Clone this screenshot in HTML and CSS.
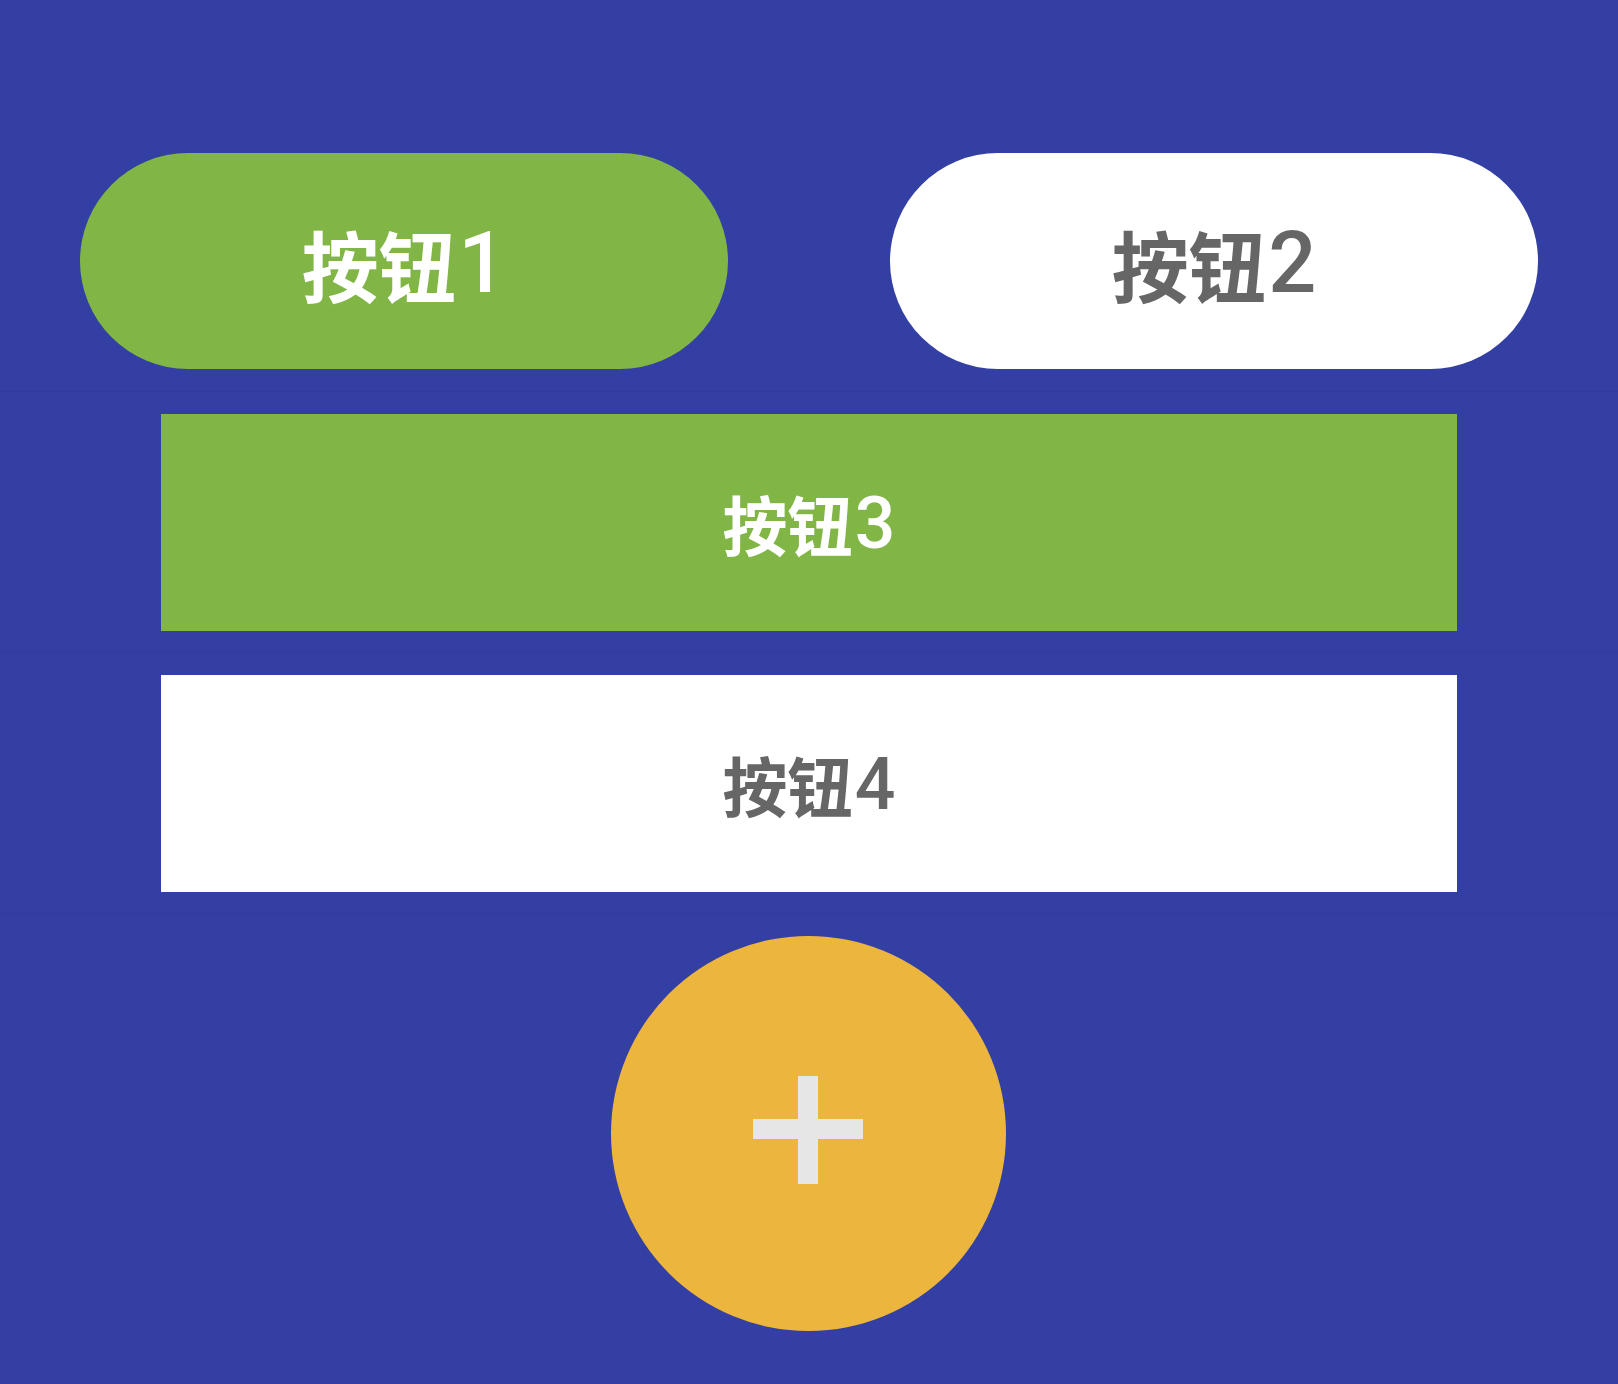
FILE: index.html
```html
<!DOCTYPE html>
<html lang="zh-CN">
<head>
<meta charset="utf-8">
<title>按钮</title>
<link rel="stylesheet" href="styles.css">
</head>
<body>
<main class="screen">
  <section class="row row-pills">
    <button class="btn pill green">按钮<span class="num">1</span></button>
    <button class="btn pill white">按钮<span class="num">2</span></button>
  </section>
  <section class="row row-block">
    <button class="btn block green">按钮<span class="num">3</span></button>
  </section>
  <section class="row row-block">
    <button class="btn block white">按钮<span class="num">4</span></button>
  </section>
  <section class="row row-fab">
    <button class="fab" aria-label="添加">
      <svg class="plus" viewBox="0 0 110 108" width="110" height="108">
        <rect x="45" y="0" width="20" height="108" fill="#e6e6e6"/>
        <rect x="0" y="43" width="110" height="20" fill="#e6e6e6"/>
      </svg>
    </button>
  </section>
</main>
</body>
</html>
```

FILE: styles.css
```css
html, body {
  margin: 0;
  padding: 0;
}

body {
  background: #333fa3;
  width: 1618px;
  height: 1384px;
  overflow: hidden;
  font-family: "Noto Sans CJK SC", sans-serif;
}

.screen {
  padding-top: 130px;
  display: flex;
  flex-direction: column;
}

.row {
  display: flex;
  box-sizing: border-box;
  border-bottom: 1px solid #303b9a;
}

.row-pills {
  height: 262px;
  padding: 23px 80px;
  gap: 162px;
}

.row-block {
  height: 261px;
  padding: 22px 161px;
}

.row-fab {
  border-bottom: none;
  padding-top: 22px;
  justify-content: center;
}

.btn {
  border: none;
  margin: 0;
  padding: 0;
  display: flex;
  align-items: center;
  justify-content: center;
  font-family: "Noto Sans CJK SC", sans-serif;
  font-weight: 700;
  line-height: 1;
  cursor: pointer;
}

.num {
  font-family: Roboto, "Noto Sans CJK SC", sans-serif;
  font-weight: 500;
  font-size: 1.1em;
  margin-left: 0.03em;
}

.pill {
  flex: 1;
  height: 216px;
  border-radius: 108px;
  font-size: 77px;
  padding-top: 4px;
}

.block {
  flex: 1;
  height: 217px;
  border-radius: 0;
  font-size: 65px;
  padding-top: 2px;
}

.green {
  background: #81b647;
  color: #ffffff;
}

.white {
  background: #ffffff;
  color: #666666;
}

.fab {
  width: 395px;
  height: 395px;
  border-radius: 50%;
  border: none;
  padding: 0;
  background: #ecb53e;
  display: flex;
  align-items: center;
  justify-content: center;
  margin-left: -2px;
}

.plus {
  display: block;
  margin-top: -8px;
}
```
